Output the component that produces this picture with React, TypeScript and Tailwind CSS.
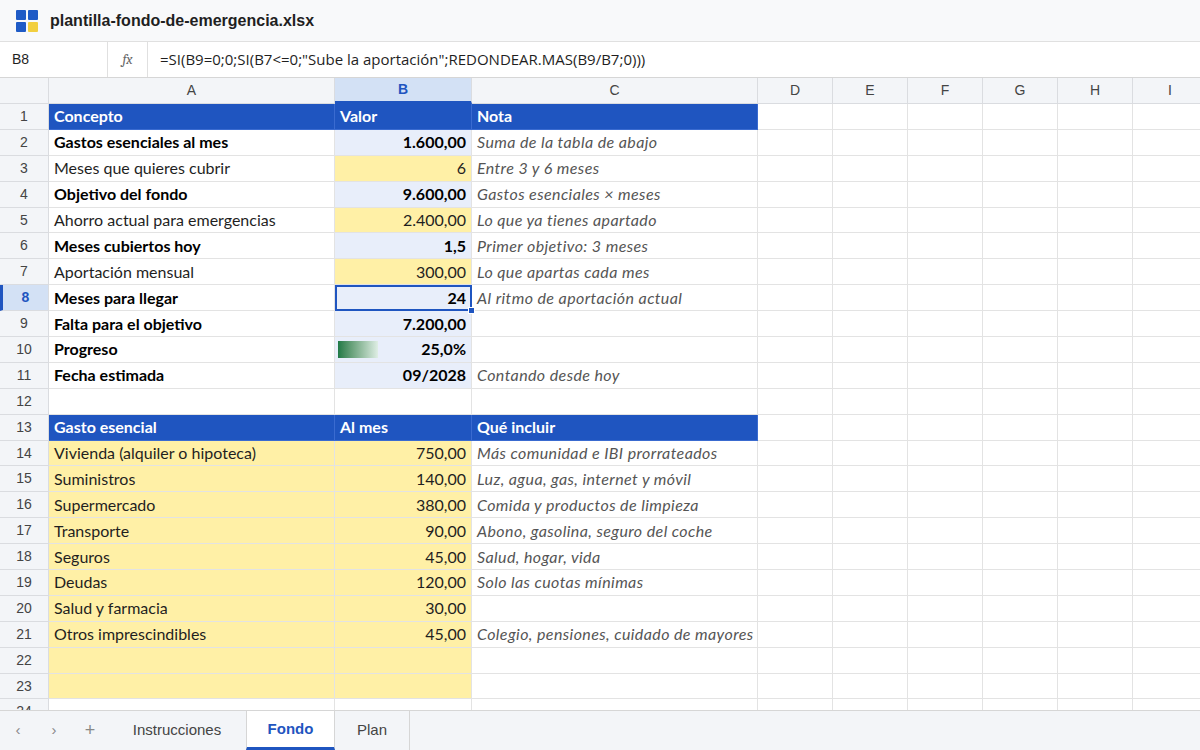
import React from "react";

type Cell = { t?: string; b?: boolean; i?: boolean; r?: boolean; bg?: string; h?: boolean };
const Y = "bg-[#fff0a6]";
const L = "bg-[#e8eefa]";
const rows: Cell[][] = [
  [{ t: "Concepto", h: true }, { t: "Valor", h: true }, { t: "Nota", h: true }],
  [{ t: "Gastos esenciales al mes", b: true }, { t: "1.600,00", b: true, r: true, bg: L }, { t: "Suma de la tabla de abajo", i: true }],
  [{ t: "Meses que quieres cubrir" }, { t: "6", r: true, bg: Y }, { t: "Entre 3 y 6 meses", i: true }],
  [{ t: "Objetivo del fondo", b: true }, { t: "9.600,00", b: true, r: true, bg: L }, { t: "Gastos esenciales × meses", i: true }],
  [{ t: "Ahorro actual para emergencias" }, { t: "2.400,00", r: true, bg: Y }, { t: "Lo que ya tienes apartado", i: true }],
  [{ t: "Meses cubiertos hoy", b: true }, { t: "1,5", b: true, r: true, bg: L }, { t: "Primer objetivo: 3 meses", i: true }],
  [{ t: "Aportación mensual" }, { t: "300,00", r: true, bg: Y }, { t: "Lo que apartas cada mes", i: true }],
  [{ t: "Meses para llegar", b: true }, { t: "24", b: true, r: true, bg: L }, { t: "Al ritmo de aportación actual", i: true }],
  [{ t: "Falta para el objetivo", b: true }, { t: "7.200,00", b: true, r: true, bg: L }, {}],
  [{ t: "Progreso", b: true }, { t: "25,0%", b: true, r: true, bg: L }, {}],
  [{ t: "Fecha estimada", b: true }, { t: "09/2028", b: true, r: true, bg: L }, { t: "Contando desde hoy", i: true }],
  [{}, {}, {}],
  [{ t: "Gasto esencial", h: true }, { t: "Al mes", h: true }, { t: "Qué incluir", h: true }],
  [{ t: "Vivienda (alquiler o hipoteca)", bg: Y }, { t: "750,00", r: true, bg: Y }, { t: "Más comunidad e IBI prorrateados", i: true }],
  [{ t: "Suministros", bg: Y }, { t: "140,00", r: true, bg: Y }, { t: "Luz, agua, gas, internet y móvil", i: true }],
  [{ t: "Supermercado", bg: Y }, { t: "380,00", r: true, bg: Y }, { t: "Comida y productos de limpieza", i: true }],
  [{ t: "Transporte", bg: Y }, { t: "90,00", r: true, bg: Y }, { t: "Abono, gasolina, seguro del coche", i: true }],
  [{ t: "Seguros", bg: Y }, { t: "45,00", r: true, bg: Y }, { t: "Salud, hogar, vida", i: true }],
  [{ t: "Deudas", bg: Y }, { t: "120,00", r: true, bg: Y }, { t: "Solo las cuotas mínimas", i: true }],
  [{ t: "Salud y farmacia", bg: Y }, { t: "30,00", r: true, bg: Y }, {}],
  [{ t: "Otros imprescindibles", bg: Y }, { t: "45,00", r: true, bg: Y }, { t: "Colegio, pensiones, cuidado de mayores", i: true }],
  [{ bg: Y }, { bg: Y }, {}],
  [{ bg: Y }, { bg: Y }, {}],
  [{}, {}, {}],
];
const widths = [49, 286, 137, 286, 75, 75, 75, 75, 75, 75];
const cols = "grid grid-cols-[49px_286px_137px_286px_75px_75px_75px_75px_75px_75px]";

export default function App() {
  return (
    <div className="w-[1200px] h-[750px] overflow-hidden flex flex-col bg-white text-[#1f1f1f]" style={{ fontFamily: "Lato, 'Noto Sans', sans-serif" }}>
      <div className="h-[42px] flex items-center gap-3 px-4 bg-[#f8f9fa] border-b border-[#e0e0e0] shrink-0">
        <div className="grid grid-cols-2 gap-[2px] w-[22px] h-[22px]">
          <div className="bg-[#1f5bc6] rounded-[1px]" /><div className="bg-[#1f5bc6] rounded-[1px]" />
          <div className="bg-[#1f5bc6] rounded-[1px]" /><div className="bg-[#f2cf3f] rounded-[1px]" />
        </div>
        <span className="text-[16px] font-bold" style={{ fontFamily: "'Liberation Sans', Arial, sans-serif" }}>plantilla-fondo-de-emergencia.xlsx</span>
      </div>
      <div className="h-[36px] flex items-center border-b border-[#d6d6d6] shrink-0 text-[14px]" style={{ fontFamily: "'Liberation Sans', Arial, sans-serif" }}>
        <div className="w-[108px] h-full flex items-center pl-3 border-r border-[#e0e0e0]">B8</div>
        <div className="w-[40px] h-full flex items-center justify-center border-r border-[#e0e0e0] italic text-[#666] font-serif">fx</div>
        <div className="pl-3 text-[15px]" style={{ fontFamily: "'Open Sans', sans-serif" }}>=SI(B9=0;0;SI(B7&lt;=0;"Sube la aportación";REDONDEAR.MAS(B9/B7;0)))</div>
      </div>
      <div className="flex-1 overflow-hidden relative">
        <div className={`${cols} h-[26px] bg-[#f3f5f8] text-[14px] text-[#444]`} style={{ fontFamily: "'Liberation Sans', Arial, sans-serif" }}>
          {["", "A", "B", "C", "D", "E", "F", "G", "H", "I"].map((c, k) => (
            <div key={k} className={`flex items-center justify-center border-r border-b border-[#dadce0] ${k === 2 ? "bg-[#d3e1f5] text-[#1f55c0] font-bold border-b-[3px] border-b-[#1f55c0]" : ""}`}>{c}</div>
          ))}
        </div>
        {rows.map((row, ri) => (
          <div key={ri} className={`${cols} h-[25.9px] text-[16px]`}>
            <div className={`flex items-center justify-center border-r border-b border-[#dadce0] text-[14px] ${ri === 7 ? "bg-[#d3e1f5] text-[#1f55c0] font-bold border-l-[3px] border-l-[#1f55c0]" : "bg-[#f3f5f8] text-[#444]"}`} style={{ fontFamily: "'Liberation Sans', Arial, sans-serif" }}>{ri + 1}</div>
            {row.map((c, ci) => (
              <div key={ci} className={`relative flex items-center px-[5px] whitespace-nowrap overflow-visible border-r border-b ${c.h ? "bg-[#1f55c0] text-white font-bold border-[#3a6bd0]" : `${c.bg ?? "bg-white"} border-[#e3e3e3]`} ${c.r ? "justify-end" : ""} ${c.b ? "font-bold text-black" : ""} ${c.i ? "italic text-[#555] tracking-[0.4px]" : ""} ${ri === 7 && ci === 1 ? "outline outline-2 outline-[#1f55c0] -outline-offset-2 z-10" : ""}`}>
                {ri === 9 && ci === 1 && <div className="absolute left-[3px] top-[4px] w-[40px] h-[17px] bg-gradient-to-r from-[#1e7a46] to-[#dfeee5]" />}
                <span className="relative">{c.t}</span>
                {ri === 7 && ci === 1 && <div className="absolute -right-[4px] -bottom-[4px] w-[7px] h-[7px] bg-[#1f55c0] border border-white" />}
              </div>
            ))}
            {widths.slice(4).map((_, k) => <div key={k} className="border-r border-b border-[#e3e3e3]" />)}
          </div>
        ))}
      </div>
      <div className="h-[40px] shrink-0 flex items-stretch bg-[#f3f5f8] border-t border-[#d6d6d6] text-[15px] text-[#444]" style={{ fontFamily: "'Liberation Sans', Arial, sans-serif" }}>
        <div className="w-[36px] flex items-center justify-center text-[#888]">‹</div>
        <div className="w-[36px] flex items-center justify-center text-[#888]">›</div>
        <div className="w-[36px] flex items-center justify-center text-[#888] text-[18px]">+</div>
        <div className="w-[138px] flex items-center justify-center">Instrucciones</div>
        <div className="w-[89px] flex items-center justify-center bg-white font-bold text-[#1f55c0] border-x border-[#d6d6d6] border-b-[3px] border-b-[#1f55c0]">Fondo</div>
        <div className="w-[75px] flex items-center justify-center border-r border-[#d6d6d6]">Plan</div>
      </div>
    </div>
  );
}
